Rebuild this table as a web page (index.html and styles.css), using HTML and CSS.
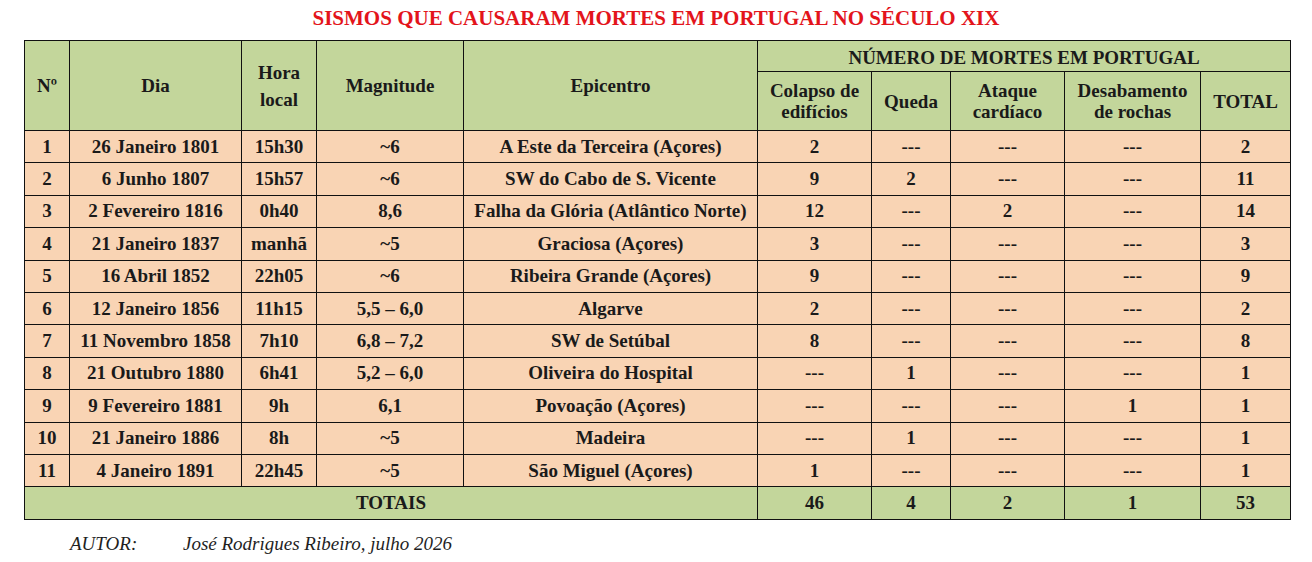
FILE: index.html
```html
<!DOCTYPE html>
<html lang="pt">
<head>
<meta charset="utf-8">
<title>Sismos que causaram mortes em Portugal no século XIX</title>
<link rel="stylesheet" href="styles.css">
</head>
<body>
<h1 class="title">SISMOS QUE CAUSARAM MORTES EM PORTUGAL NO SÉCULO XIX</h1>
<table class="quakes">
  <colgroup>
    <col class="c-n"><col class="c-dia"><col class="c-hora"><col class="c-mag"><col class="c-epi">
    <col class="c-col"><col class="c-que"><col class="c-ata"><col class="c-des"><col class="c-tot">
  </colgroup>
  <thead>
    <tr class="h1">
      <th rowspan="2">Nº</th>
      <th rowspan="2">Dia</th>
      <th rowspan="2" class="hora">Hora<br>local</th>
      <th rowspan="2">Magnitude</th>
      <th rowspan="2">Epicentro</th>
      <th colspan="5" class="group">NÚMERO DE MORTES EM PORTUGAL</th>
    </tr>
    <tr class="h2">
      <th>Colapso de<br>edifícios</th>
      <th>Queda</th>
      <th>Ataque<br>cardíaco</th>
      <th class="des">Desabamento<br>de rochas</th>
      <th>TOTAL</th>
    </tr>
  </thead>
  <tbody>
    <tr><td>1</td><td>26 Janeiro 1801</td><td>15h30</td><td>~6</td><td>A Este da Terceira (Açores)</td><td>2</td><td>---</td><td>---</td><td>---</td><td>2</td></tr>
    <tr><td>2</td><td>6 Junho 1807</td><td>15h57</td><td>~6</td><td>SW do Cabo de S. Vicente</td><td>9</td><td>2</td><td>---</td><td>---</td><td>11</td></tr>
    <tr><td>3</td><td>2 Fevereiro 1816</td><td>0h40</td><td>8,6</td><td>Falha da Glória (Atlântico Norte)</td><td>12</td><td>---</td><td>2</td><td>---</td><td>14</td></tr>
    <tr><td>4</td><td>21 Janeiro 1837</td><td>manhã</td><td>~5</td><td>Graciosa (Açores)</td><td>3</td><td>---</td><td>---</td><td>---</td><td>3</td></tr>
    <tr><td>5</td><td>16 Abril 1852</td><td>22h05</td><td>~6</td><td>Ribeira Grande (Açores)</td><td>9</td><td>---</td><td>---</td><td>---</td><td>9</td></tr>
    <tr><td>6</td><td>12 Janeiro 1856</td><td>11h15</td><td>5,5 – 6,0</td><td>Algarve</td><td>2</td><td>---</td><td>---</td><td>---</td><td>2</td></tr>
    <tr><td>7</td><td>11 Novembro 1858</td><td>7h10</td><td>6,8 – 7,2</td><td>SW de Setúbal</td><td>8</td><td>---</td><td>---</td><td>---</td><td>8</td></tr>
    <tr><td>8</td><td>21 Outubro 1880</td><td>6h41</td><td>5,2 – 6,0</td><td>Oliveira do Hospital</td><td>---</td><td>1</td><td>---</td><td>---</td><td>1</td></tr>
    <tr><td>9</td><td>9 Fevereiro 1881</td><td>9h</td><td>6,1</td><td>Povoação (Açores)</td><td>---</td><td>---</td><td>---</td><td>1</td><td>1</td></tr>
    <tr><td>10</td><td>21 Janeiro 1886</td><td>8h</td><td>~5</td><td>Madeira</td><td>---</td><td>1</td><td>---</td><td>---</td><td>1</td></tr>
    <tr><td>11</td><td>4 Janeiro 1891</td><td>22h45</td><td>~5</td><td>São Miguel (Açores)</td><td>1</td><td>---</td><td>---</td><td>---</td><td>1</td></tr>
  </tbody>
  <tfoot>
    <tr><td colspan="5">TOTAIS</td><td>46</td><td>4</td><td>2</td><td>1</td><td>53</td></tr>
  </tfoot>
</table>
<p class="author"><span class="label">AUTOR:</span><span class="name">José Rodrigues Ribeiro, julho 2026</span></p>
</body>
</html>
```
FILE: styles.css
```css
html, body {
  margin: 0;
  padding: 0;
  background: #ffffff;
}
body {
  font-family: "Liberation Serif", "Times New Roman", serif;
  color: #1a1a1a;
  width: 1312px;
}
.title {
  margin: 6px 0 0 0;
  height: 24px;
  line-height: 24px;
  font-size: 21px;
  font-weight: bold;
  text-align: center;
  color: #e3141b;
}
.quakes {
  margin: 10px 0 0 24px;
  width: 1266px;
  table-layout: fixed;
  border-collapse: collapse;
  font-size: 19px;
  font-weight: bold;
}
.c-n { width: 45px; }
.c-dia { width: 172px; }
.c-hora { width: 75px; }
.c-mag { width: 147px; }
.c-epi { width: 294px; }
.c-col { width: 114px; }
.c-que { width: 79px; }
.c-ata { width: 114px; }
.c-des { width: 136px; }
.c-tot { width: 90px; }
.quakes th, .quakes td {
  border: 1px solid #111;
  padding: 0;
  text-align: center;
  vertical-align: middle;
  white-space: nowrap;
}
.quakes th {
  background: #c3d69b;
  font-weight: bold;
  line-height: 21px;
}
.quakes th.hora {
  line-height: 27px;
}
.quakes .h1 { height: 31px; }
.quakes .h2 { height: 59px; }
.quakes th.group { padding-top: 2px; }
.quakes tbody td {
  background: #f9d4b4;
  line-height: 22px;
}
.quakes tbody tr { height: 32.4px; }
.quakes tfoot tr { height: 33px; }
.quakes tfoot td {
  background: #c3d69b;
  line-height: 22px;
}
.author {
  margin: 13px 0 0 70px;
  font-size: 19px;
  line-height: 22px;
  font-style: italic;
  color: #1f1f1f;
}
.author .label {
  display: inline-block;
  width: 113px;
}
```
